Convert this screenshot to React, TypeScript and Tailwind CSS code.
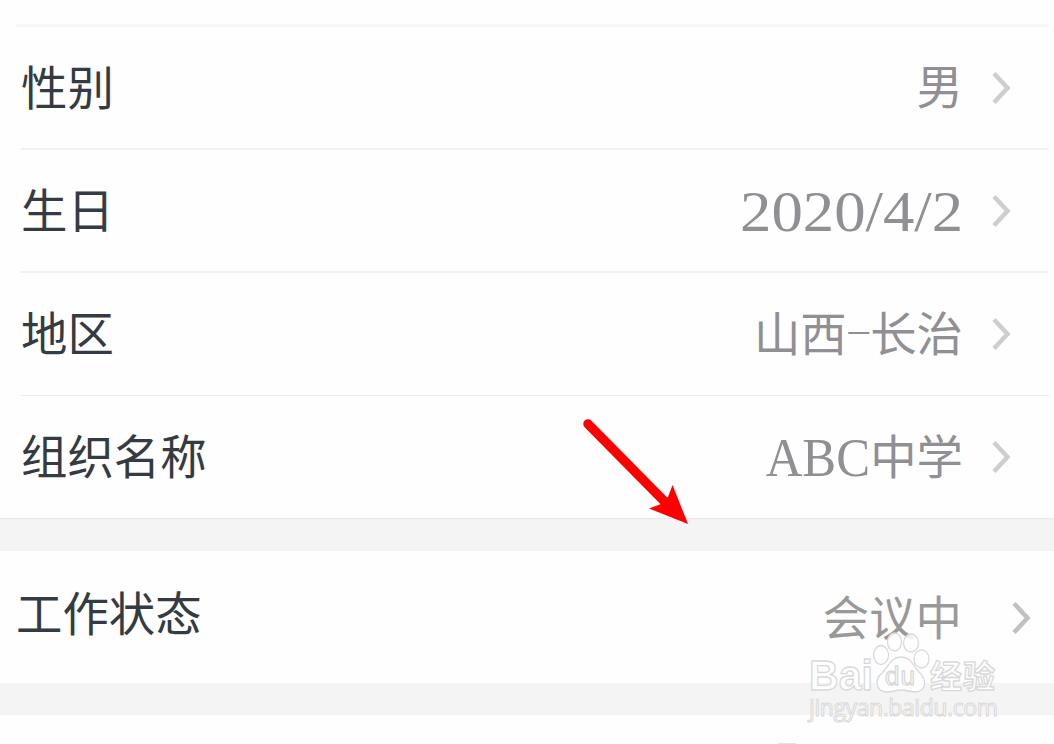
type ProfileRow = {
  label: string
  value: React.ReactNode
  rowClass: string
}

const rows: ProfileRow[] = [
  {
    label: "性别",
    value: "男",
    rowClass: "h-[121px]",
  },
  {
    label: "生日",
    value: <span className="mb-[2px] inline-block origin-right scale-x-[1.12] text-[56px]">2020/4/2</span>,
    rowClass: "h-[121px]",
  },
  {
    label: "地区",
    value: (
      <>
        山西
        <span className="relative -top-[6px] mx-[4px] inline-block scale-x-[1.75] scale-y-[0.6]">-</span>
        长治
      </>
    ),
    rowClass: "h-[122px]",
  },
  {
    label: "组织名称",
    value: (
      <span className="flex items-center">
        <span className="-mt-[3px] inline-block origin-right scale-x-[0.94] text-[54px]">ABC</span>
        <span>中学</span>
      </span>
    ),
    rowClass: "h-[122px]",
  },
]

const dividers = ["h-[2px] bg-[#f1f1f1]", "h-[2px] bg-[#f1f1f1]", "h-px bg-[#ebebeb]", "h-px bg-[#e8e8e8]"]

function Chevron({ className }: { className: string }) {
  return (
    <svg viewBox="0 0 20 34" className={`h-[34px] w-5 shrink-0 ${className}`} fill="none">
      <path d="M3 2.5 L16.5 17 L3 31.5" stroke="currentColor" strokeWidth="4.5" />
    </svg>
  )
}

function Arrow() {
  return (
    <svg viewBox="0 0 110 110" className="absolute left-[580px] top-[416px] h-[110px] w-[110px]">
      <path d="M8 8 L85 86" stroke="#ff0000" strokeWidth="9.5" strokeLinecap="round" />
      <path d="M108 108 L69 92.5 L81 88 L88 81 L92.5 69 Z" fill="#ff0000" />
    </svg>
  )
}

function Watermark() {
  return (
    <svg
      viewBox="0 0 200 96"
      className="absolute left-[804px] top-[630px] h-[96px] w-[200px]"
      fill="#ffffff"
      fillOpacity="0.85"
      stroke="#d9d9d9"
      strokeWidth="1.3"
      strokeLinejoin="round"
    >
      <ellipse cx="77" cy="25" rx="7.5" ry="9.5" />
      <ellipse cx="90.5" cy="12" rx="7" ry="9" />
      <ellipse cx="107" cy="13" rx="7.5" ry="9" />
      <ellipse cx="117.5" cy="29" rx="7.5" ry="9" />
      <path d="M97 27 C87 27 85 36 78 43 C69 51 73 62 83 62 C89 62 91 60 97 60 C103 60 106 62 112 62 C122 61 123 50 116 43 C109 36 107 27 97 27 Z" />
      <text x="5" y="60" fontSize="43" fontWeight="700" textLength="64" lengthAdjust="spacingAndGlyphs" className="font-['Liberation_Sans',sans-serif]">
        Bai
      </text>
      <text x="81" y="55" fontSize="26" fontWeight="400" textLength="30" className="font-['Liberation_Sans',sans-serif]">
        du
      </text>
      <text x="126" y="58" fontSize="32" fontWeight="700" textLength="65" className="font-['Noto_Sans_CJK_SC',sans-serif]">
        经验
      </text>
      <text x="5" y="86" fontSize="23" fontWeight="500" textLength="189" strokeWidth="1" className="font-['Open_Sans',sans-serif]">
        jingyan.baidu.com
      </text>
    </svg>
  )
}

export default function App() {
  return (
    <div className="relative h-[744px] w-[1054px] overflow-hidden bg-[#fefefe] font-['Liberation_Serif','Noto_Sans_CJK_SC',serif] text-[46.4px] font-normal leading-none">
      <div className="h-6" />
      <div className="ml-4 mr-[5px] h-[3px] bg-[#f6f6f6]" />

      {rows.map((row, i) => (
        <div key={row.label}>
          <div className={`flex items-center pl-[21px] pr-[43px] ${row.rowClass}`}>
            <span className="mt-[5px] whitespace-nowrap text-[#343b42]">{row.label}</span>
            <span className="ml-auto mr-[28px] mt-[4px] whitespace-nowrap text-[#8f8f94]">{row.value}</span>
            <Chevron className="text-[#cecece]" />
          </div>
          <div className={`${i === 3 ? "" : "ml-[21px] mr-[5px]"} ${dividers[i]}`} />
        </div>
      ))}

      <div className="h-8 bg-[#f4f4f4]" />
      <div className="flex h-[132px] items-center pl-[16px] pr-[23px]">
        <span className="-mt-[1px] whitespace-nowrap text-[#343b42]">工作状态</span>
        <span className="ml-auto mr-[49px] mt-[7px] whitespace-nowrap text-[#999999]">会议中</span>
        <Chevron className="mt-[2px] text-[#bec2c5]" />
      </div>
      <div className="h-8 bg-[#f4f4f4]" />
      <div className="h-[28px]" />
      <div className="ml-[778px] h-px w-[18px] bg-[#e2e2e2]" />

      <Arrow />
      <Watermark />
    </div>
  )
}
